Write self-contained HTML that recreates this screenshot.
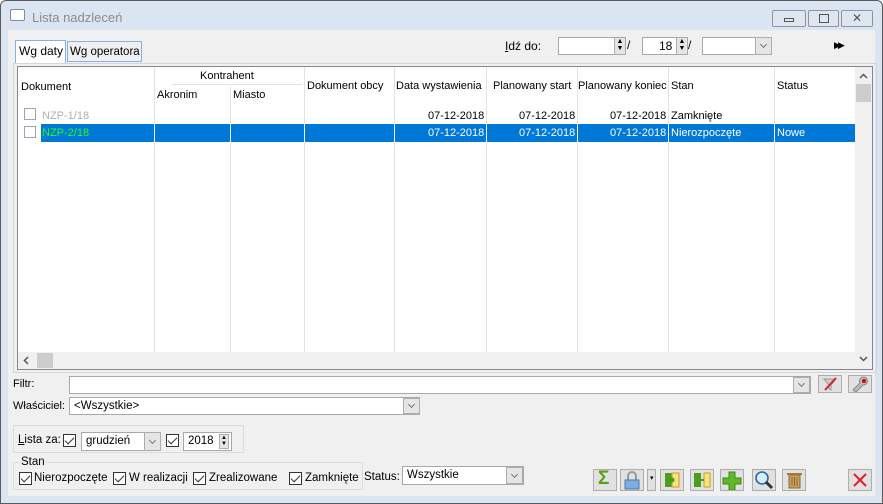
<!DOCTYPE html>
<html><head><meta charset="utf-8"><style>
*{box-sizing:border-box;margin:0;padding:0}
body{width:883px;height:504px;overflow:hidden;font-family:"Liberation Sans","DejaVu Sans",sans-serif;font-size:11px;color:#000;background:#fff;position:relative}
.abs{position:absolute}
.win{left:0;top:0;width:883px;height:504px;background:#dbe5f1;border:1px solid #5a5a5a;border-radius:6px 6px 0 0}
.body{left:8px;top:30px;width:867px;height:466px;background:#f0f0f0}
.inp{background:#fff;border:1px solid #a9a9a9;position:absolute}
.dd{position:absolute;background:#e5e5e5;border:1px solid #adadad;width:17px}
.dd:after{content:"";position:absolute;left:5px;top:50%;margin-top:-4px;width:4px;height:4px;border:solid #777;border-width:0 1px 1px 0;transform:rotate(45deg)}
.cb{position:absolute;width:13px;height:13px;border:1px solid #333;background:#fff}
.cb:after{content:"";position:absolute;left:3px;top:0px;width:4px;height:8px;border:solid #333;border-width:0 1px 1px 0;transform:rotate(45deg)}
.btn{position:absolute;width:24px;height:22px;background:#e1e1e1;border:1px solid #adadad}
.vl{position:absolute;top:0;width:1px;height:285px;background:#e3e3e3}
.t{position:absolute;white-space:nowrap}
</style></head><body>
<div class="abs win"></div>
<div class="t" style="left:10px;top:9px;width:15px;height:12px;border:1px solid #7a8ca0;border-radius:2px;background:#fff"></div>
<div class="t" style="left:32px;top:10px;font-size:13px;color:#8c8c8c">Lista nadzleceń</div>
<div class="abs" style="left:772px;top:10px;width:34px;height:17px;border:1px solid #8a96a4;border-radius:2px;background:#dee6f0"><div class="abs" style="left:11px;top:7px;width:10px;height:4px;border:1px solid #555"></div></div>
<div class="abs" style="left:808px;top:10px;width:31px;height:17px;border:1px solid #8a96a4;border-radius:2px;background:#dee6f0"><div class="abs" style="left:10px;top:3px;width:10px;height:9px;border:1px solid #555"></div></div>
<div class="abs" style="left:841px;top:10px;width:32px;height:17px;border:1px solid #8a96a4;border-radius:2px;background:#dee6f0;text-align:center;line-height:15px;font-size:12px;color:#555">✕</div>
<div class="abs body"></div>
<!-- tabs -->
<div class="abs" style="left:15px;top:40px;width:51px;height:23px;background:#fff;border:1px solid #7eb4ea;border-bottom:none"></div>
<div class="t" style="left:19px;top:44px;font-size:12px">Wg daty</div>
<div class="abs" style="left:67px;top:41px;width:75px;height:21px;background:#f0f0f0;border:1px solid #7eb4ea"></div>
<div class="t" style="left:70px;top:46px;font-size:11.5px">Wg operatora</div>
<!-- go to -->
<div class="t" style="left:505px;top:39px;font-size:12px"><u>I</u>dź do:</div>
<div class="inp" style="left:558px;top:37px;width:68px;height:18px"></div>
<div class="abs" style="left:614px;top:38px;width:11px;height:16px;background:#e5e5e5;border-left:1px solid #adadad;font-size:7px;line-height:7px;text-align:center">▲<br>▼</div>
<div class="t" style="left:627px;top:38px;font-size:12px">/</div>
<div class="inp" style="left:642px;top:37px;width:46px;height:18px"></div>
<div class="t" style="left:659px;top:39px;font-size:12px">18</div>
<div class="abs" style="left:676px;top:38px;width:11px;height:16px;background:#e5e5e5;border-left:1px solid #adadad;font-size:7px;line-height:7px;text-align:center">▲<br>▼</div>
<div class="t" style="left:688px;top:38px;font-size:12px">/</div>
<div class="inp" style="left:702px;top:37px;width:70px;height:18px"></div>
<div class="dd" style="left:755px;top:37px;height:18px"></div>
<div class="t" style="left:834px;top:40px;font-size:9px;letter-spacing:-3px">▶▶</div>
<!-- grid panel -->
<div class="abs" style="left:13px;top:63px;width:864px;height:310px;border:1px solid #d5d5d5"></div>
<div class="abs" style="left:17px;top:66px;width:856px;height:304px;border:1px solid #828790;background:#fff;overflow:hidden">
 <div class="vl" style="left:136px"></div><div class="vl" style="left:212px;top:20px"></div><div class="vl" style="left:286px"></div><div class="vl" style="left:376px"></div><div class="vl" style="left:468px"></div><div class="vl" style="left:559px"></div><div class="vl" style="left:650px"></div><div class="vl" style="left:756px"></div>
 <div class="abs" style="left:154px;top:17px;width:130px;height:1px;background:#e3e3e3"></div>
 <div class="t" style="left:3px;top:14px">Dokument</div>
 <div class="t" style="left:182px;top:3px">Kontrahent</div>
 <div class="t" style="left:139px;top:22px">Akronim</div>
 <div class="t" style="left:215px;top:22px">Miasto</div>
 <div class="t" style="left:289px;top:13px">Dokument obcy</div>
 <div class="t" style="left:378px;top:13px">Data wystawienia</div>
 <div class="t" style="left:475px;top:13px">Planowany start</div>
 <div class="t" style="left:560px;top:13px">Planowany koniec</div>
 <div class="t" style="left:653px;top:13px">Stan</div>
 <div class="t" style="left:759px;top:13px">Status</div>
 <div class="abs" style="left:6px;top:41px;width:12px;height:12px;border:1px solid #9da5b4"></div>
 <div class="t" style="left:24px;top:43px;color:#b0b0b0">NZP-1/18</div>
 <div class="t" style="left:410px;top:43px">07-12-2018</div>
 <div class="t" style="left:501px;top:43px">07-12-2018</div>
 <div class="t" style="left:592px;top:43px">07-12-2018</div>
 <div class="t" style="left:653px;top:43px">Zamknięte</div>
 <div class="abs" style="left:6px;top:59px;width:12px;height:12px;border:1px solid #9da5b4"></div>
 <div class="abs" style="left:23px;top:57px;width:814px;height:18px;background:#0078d7;color:#fff">
  <div class="t" style="left:1px;top:3px;color:#20ff20">NZP-2/18</div>
  <div class="abs" style="left:113px;top:0;width:1px;height:18px;background:#fff"></div>
  <div class="abs" style="left:189px;top:0;width:1px;height:18px;background:#fff"></div>
  <div class="abs" style="left:263px;top:0;width:1px;height:18px;background:#fff"></div>
  <div class="abs" style="left:353px;top:0;width:1px;height:18px;background:#fff"></div>
  <div class="abs" style="left:445px;top:0;width:1px;height:18px;background:#fff"></div>
  <div class="abs" style="left:536px;top:0;width:1px;height:18px;background:#fff"></div>
  <div class="abs" style="left:627px;top:0;width:1px;height:18px;background:#fff"></div>
  <div class="abs" style="left:733px;top:0;width:1px;height:18px;background:#fff"></div>
  <div class="t" style="left:387px;top:3px">07-12-2018</div>
  <div class="t" style="left:478px;top:3px">07-12-2018</div>
  <div class="t" style="left:569px;top:3px">07-12-2018</div>
  <div class="t" style="left:630px;top:3px">Nierozpoczęte</div>
  <div class="t" style="left:736px;top:3px">Nowe</div>
 </div>
 <div class="abs" style="left:837px;top:0;width:17px;height:302px;background:#f0f0f0"></div>
 <svg class="abs" style="left:837px;top:0" width="17" height="302"><path d="M5 11l3.5-3.5L12 11" fill="none" stroke="#555" stroke-width="1.5"/><path d="M5 290l3.5 3.5L12 290" fill="none" stroke="#555" stroke-width="1.5"/></svg>
 <div class="abs" style="left:838px;top:17px;width:15px;height:18px;background:#cdcdcd"></div>
 <div class="abs" style="left:0;top:285px;width:837px;height:17px;background:#f0f0f0"></div>
 <svg class="abs" style="left:0;top:285px" width="17" height="17"><path d="M10 5l-3.5 3.5L10 12" fill="none" stroke="#555" stroke-width="1.5"/></svg>
 <div class="abs" style="left:19px;top:286px;width:16px;height:15px;background:#cdcdcd"></div>
</div>
<!-- filter -->
<div class="t" style="left:13px;top:378px">Filtr:</div>
<div class="inp" style="left:69px;top:376px;width:742px;height:18px"></div>
<div class="dd" style="left:793px;top:377px;height:16px"></div>
<div class="btn" style="left:818px;top:375px;height:18px"><svg width="22" height="16"><path d="M5 3h12l-5 6v5l-2-1V9z" fill="#ccc" stroke="#999"/><path d="M6 14L17 2" stroke="#e02020" stroke-width="2"/></svg></div>
<div class="btn" style="left:848px;top:375px;height:18px"><svg width="22" height="16"><path d="M4 14l7-7a4 4 0 1 1 3 2l-7 7z" fill="#bbb" stroke="#888"/><circle cx="15" cy="5" r="2" fill="#d00"/></svg></div>
<div class="t" style="left:13px;top:400px">Właściciel:</div>
<div class="inp" style="left:69px;top:397px;width:351px;height:18px"></div>
<div class="t" style="left:74px;top:400px;font-size:11.5px">&lt;Wszystkie&gt;</div>
<div class="dd" style="left:403px;top:398px;height:16px"></div>
<!-- lista za -->
<div class="abs" style="left:13px;top:425px;width:231px;height:28px;border:1px solid #dcdcdc"></div>
<div class="t" style="left:18px;top:434px;font-size:11.5px"><u>L</u>ista za:</div>
<div class="cb" style="left:63px;top:434px"></div>
<div class="inp" style="left:81px;top:432px;width:80px;height:19px"></div>
<div class="t" style="left:86px;top:435px;font-size:11.5px">grudzień</div>
<div class="dd" style="left:144px;top:432px;height:19px"></div>
<div class="cb" style="left:166px;top:434px"></div>
<div class="inp" style="left:183px;top:432px;width:49px;height:19px"></div>
<div class="t" style="left:188px;top:435px;font-size:11.5px">2018</div>
<div class="abs" style="left:219px;top:434px;width:10px;height:15px;background:#e5e5e5;border:1px solid #adadad;font-size:6px;line-height:6px;text-align:center">▲<br>▼</div>
<!-- stan -->
<div class="abs" style="left:13px;top:462px;width:350px;height:28px;border:1px solid #dcdcdc"></div>
<div class="t" style="left:20px;top:456px;font-size:11.5px;background:#f0f0f0;padding:0 1px">Stan</div>
<div class="cb" style="left:19px;top:472px"></div><div class="t" style="left:34px;top:472px;font-size:11.5px">Nierozpoczęte</div>
<div class="cb" style="left:113px;top:472px"></div><div class="t" style="left:129px;top:472px;font-size:11.5px">W realizacji</div>
<div class="cb" style="left:193px;top:472px"></div><div class="t" style="left:209px;top:472px;font-size:11.5px">Zrealizowane</div>
<div class="cb" style="left:289px;top:472px"></div><div class="t" style="left:305px;top:472px;font-size:11.5px">Zamknięte</div>
<div class="t" style="left:364px;top:471px;font-size:11.5px">Status:</div>
<div class="inp" style="left:402px;top:466px;width:122px;height:19px"></div>
<div class="t" style="left:407px;top:469px;font-size:11.5px">Wszystkie</div>
<div class="dd" style="left:506px;top:467px;height:17px"></div>
<!-- bottom buttons -->
<div class="btn" style="left:593px;top:469px"><div class="t" style="left:4px;top:-2px;font-size:19px;font-weight:bold;color:#5a9e12">Σ</div></div>
<div class="btn" style="left:620px;top:469px"><svg width="22" height="20"><path d="M7 10V6a4 4 0 0 1 8 0v4" fill="none" stroke="#999" stroke-width="2"/><rect x="4" y="10" width="14" height="9" fill="#7eaee0" stroke="#4a7ab0"/></svg></div>
<div class="btn" style="left:647px;top:469px;width:9px"><div class="t" style="left:2px;top:4px;font-size:7px">▾</div></div>
<div class="btn" style="left:660px;top:469px"><svg width="22" height="20"><rect x="4" y="3" width="7" height="14" fill="#4a9e1e"/><rect x="11" y="3" width="7" height="14" fill="#f5e27a" stroke="#c9a020"/><circle cx="11" cy="10" r="2.5" fill="#4a9e1e"/></svg></div>
<div class="btn" style="left:690px;top:469px"><svg width="22" height="20"><rect x="3" y="3" width="7" height="14" fill="#4a9e1e"/><rect x="13" y="3" width="6" height="14" fill="#f5e27a" stroke="#c9a020"/><path d="M10 10h3" stroke="#4a9e1e" stroke-width="2"/></svg></div>
<div class="btn" style="left:720px;top:469px"><svg width="22" height="20"><path d="M8 2h6v6h6v6h-6v6H8v-6H2V8h6z" fill="#5fb82a" stroke="#3a8a10"/></svg></div>
<div class="btn" style="left:752px;top:469px"><svg width="22" height="20"><circle cx="9" cy="8" r="6" fill="#d8ecfa" stroke="#2a6aa8" stroke-width="1.6"/><path d="M13 12l6 6" stroke="#333" stroke-width="3"/></svg></div>
<div class="btn" style="left:782px;top:469px"><svg width="22" height="20"><rect x="6" y="5" width="11" height="13" fill="#c8a060" stroke="#8a6a30"/><rect x="4" y="3" width="15" height="2" fill="#a07840"/><path d="M9 7v9M11.5 7v9M14 7v9" stroke="#8a6a30"/></svg></div>
<div class="btn" style="left:848px;top:469px"><svg width="22" height="20"><path d="M5 4l12 12M17 4L5 16" stroke="#e02020" stroke-width="2"/></svg></div>
</body></html>
